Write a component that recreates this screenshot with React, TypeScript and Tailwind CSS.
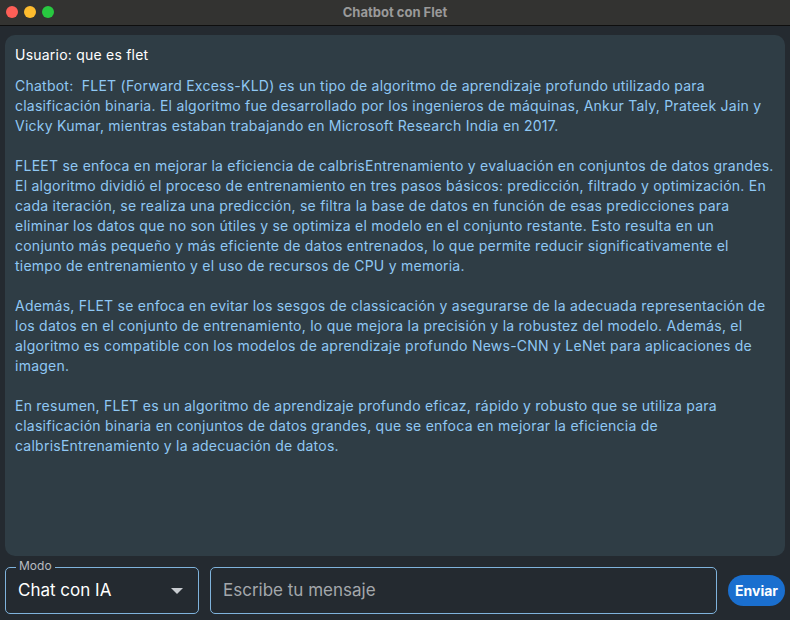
import React from "react";

const paragraphs: string[][] = [
  [
    "Chatbot:  FLET (Forward Excess-KLD) es un tipo de algoritmo de aprendizaje profundo utilizado para",
    "clasificación binaria. El algoritmo fue desarrollado por los ingenieros de máquinas, Ankur Taly, Prateek Jain y",
    "Vicky Kumar, mientras estaban trabajando en Microsoft Research India en 2017.",
  ],
  [
    "FLEET se enfoca en mejorar la eficiencia de calbrisEntrenamiento y evaluación en conjuntos de datos grandes.",
    "El algoritmo dividió el proceso de entrenamiento en tres pasos básicos: predicción, filtrado y optimización. En",
    "cada iteración, se realiza una predicción, se filtra la base de datos en función de esas predicciones para",
    "eliminar los datos que no son útiles y se optimiza el modelo en el conjunto restante. Esto resulta en un",
    "conjunto más pequeño y más eficiente de datos entrenados, lo que permite reducir significativamente el",
    "tiempo de entrenamiento y el uso de recursos de CPU y memoria.",
  ],
  [
    "Además, FLET se enfoca en evitar los sesgos de classicación y asegurarse de la adecuada representación de",
    "los datos en el conjunto de entrenamiento, lo que mejora la precisión y la robustez del modelo. Además, el",
    "algoritmo es compatible con los modelos de aprendizaje profundo News-CNN y LeNet para aplicaciones de",
    "imagen.",
  ],
  [
    "En resumen, FLET es un algoritmo de aprendizaje profundo eficaz, rápido y robusto que se utiliza para",
    "clasificación binaria en conjuntos de datos grandes, que se enfoca en mejorar la eficiencia de",
    "calbrisEntrenamiento y la adecuación de datos.",
  ],
];

export default function App() {
  return (
    <div
      className="w-[790px] h-[620px] flex flex-col bg-[#242a30] overflow-hidden"
      style={{ fontFamily: "Inter, 'Noto Sans', sans-serif" }}
    >
      {/* Title bar */}
      <div className="relative h-[26px] shrink-0 bg-[#333331] border-b border-[#0e0e0e] flex items-center justify-center">
        <div className="absolute left-[6px] top-[6px] flex gap-[6px]">
          <div className="w-[12px] h-[12px] rounded-full bg-[#fe5f57]" />
          <div className="w-[12px] h-[12px] rounded-full bg-[#febc2e]" />
          <div className="w-[12px] h-[12px] rounded-full bg-[#28c840]" />
        </div>
        <span className="text-[13px] font-bold text-[#9a9a9a]">Chatbot con Flet</span>
      </div>

      {/* Chat panel */}
      <div className="mx-[5px] mt-[9px] h-[521px] shrink-0 rounded-[10px] bg-[#2f3d45] px-[10px] pt-[10px] flex flex-col gap-[11px]">
        <div className="text-[14px] leading-[20px] text-white tracking-[0.22px]">Usuario: que es flet</div>
        <div className="text-[14px] leading-[20px] text-[#8fc8f4] flex flex-col tracking-[0.24px]">
          {paragraphs.map((p, i) => (
            <React.Fragment key={i}>
              {i > 0 && <div className="h-[20px]" />}
              {p.map((line, j) => (
                <div key={j} className="whitespace-pre">
                  {line}
                </div>
              ))}
            </React.Fragment>
          ))}
        </div>
      </div>

      {/* Bottom row */}
      <div className="mt-[11px] px-[5px] flex items-center gap-[11px]">
        <div className="relative w-[194px] h-[47px] shrink-0 rounded-[5px] border border-[#7fb3dc] flex items-center justify-between pl-[12px] pr-[15px]">
          <span className="absolute left-[10px] -top-[9px] px-[3px] bg-[#242a30] text-[12px] leading-[14px] text-[#b8bcc0]">
            Modo
          </span>
          <span className="text-[17px] text-white">Chat con IA</span>
          <svg width="12" height="6" viewBox="0 0 12 6">
            <path d="M0 0 L12 0 L6 6 Z" fill="#c8ccd0" />
          </svg>
        </div>
        <div className="w-[507px] h-[47px] shrink-0 rounded-[5px] border border-[#7fb3dc] flex items-center pl-[12px]">
          <span className="text-[17px] text-[#a3a7ab]">Escribe tu mensaje</span>
        </div>
        <button className="w-[58px] h-[31px] rounded-full bg-[#1a6fcf] text-white text-[14px] font-bold flex items-center justify-center">
          Enviar
        </button>
      </div>
    </div>
  );
}
